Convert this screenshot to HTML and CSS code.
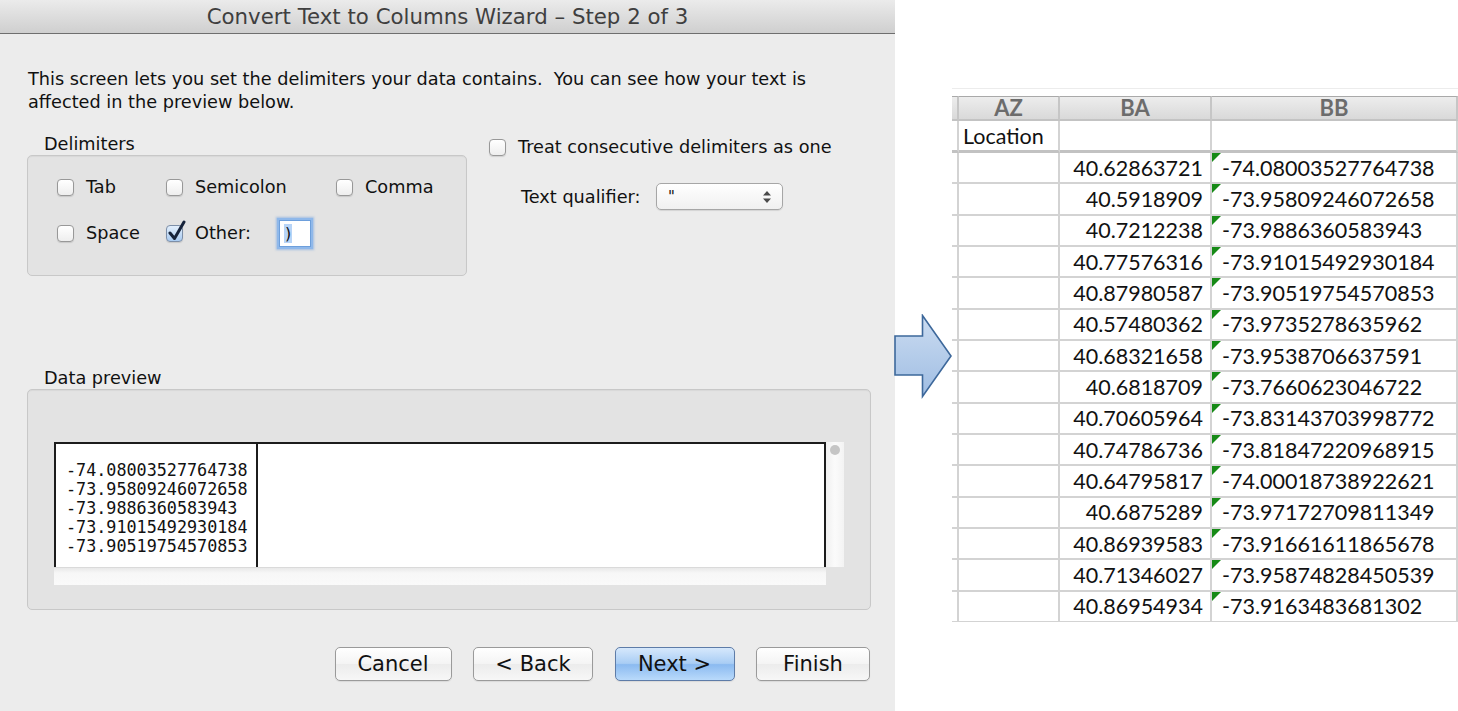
FILE: index.html
```html
<!DOCTYPE html>
<html>
<head>
<meta charset="utf-8">
<title>Convert Text to Columns Wizard</title>
<link rel="stylesheet" href="styles.css">
</head>
<body>
<div class="page">
  <div class="dialog">
    <div class="titlebar">Convert Text to Columns Wizard – Step 2 of 3</div>
    <div class="content">
      <p class="intro">This screen lets you set the delimiters your data contains.&nbsp; You can see how your text is<br>affected in the preview below.</p>
      <div class="options">
        <div class="delims">
          <div class="group-label">Delimiters</div>
          <div class="group-box delim-box">
            <div class="delim-grid">
              <div class="check"><span class="cb"></span><span>Tab</span></div>
              <div class="check"><span class="cb"></span><span>Semicolon</span></div>
              <div class="check"><span class="cb"></span><span>Comma</span></div>
              <div class="check"><span class="cb"></span><span>Space</span></div>
              <div class="check"><span class="cb checked"><svg class="tick" width="20" height="22" viewBox="0 0 20 22"><path d="M3 13 L7.5 18.5 L17 2" fill="none" stroke="#16233a" stroke-width="3" stroke-linejoin="round" stroke-linecap="round"/></svg></span><span class="other-label">Other:</span><span class="field"><span class="sel">)</span></span></div>
            </div>
          </div>
        </div>
        <div class="side">
          <div class="check"><span class="cb"></span><span>Treat consecutive delimiters as one</span></div>
          <div class="qualifier">
            <span class="q-label">Text qualifier:</span>
            <div class="select"><span>"</span><svg class="updown" width="8" height="12" viewBox="0 0 8 12"><path d="M4 0 L8 4.5 L0 4.5 Z M4 12 L8 7.5 L0 7.5 Z" fill="#4a4a4a"/></svg></div>
          </div>
        </div>
      </div>
      <div class="group-label preview-label">Data preview</div>
      <div class="group-box preview-box">
        <div class="preview">
          <div class="preview-table">
            <div class="pcol pcol1">-74.08003527764738<br>-73.95809246072658<br>-73.9886360583943<br>-73.91015492930184<br>-73.90519754570853</div>
            <div class="pcol pcol2"></div>
          </div>
          <div class="vscroll"><span class="knob"></span></div>
          <div class="hscroll"></div>
          <div class="corner"></div>
        </div>
      </div>
      <div class="buttons">
        <div class="btn w117">Cancel</div>
        <div class="btn w120">&lt; Back</div>
        <div class="btn w120 primary">Next &gt;</div>
        <div class="btn w114">Finish</div>
      </div>
    </div>
  </div>
  <div class="sheet-area">
    <svg class="arrow" width="60" height="86" viewBox="0 0 60 86">
      <defs>
        <linearGradient id="ag" x1="0" y1="0" x2="0" y2="1">
          <stop offset="0" stop-color="#cbdcf1"/>
          <stop offset="1" stop-color="#9fbde3"/>
        </linearGradient>
      </defs>
      <path d="M1 22 L28.5 22 L28.5 1.5 L57 42 L28.5 82.5 L28.5 61 L1 61 Z" fill="url(#ag)" stroke="#3d689b" stroke-width="1.6" stroke-linejoin="miter"/>
    </svg>
    <div class="sheet">
      <div class="grid">
        <div class="c h stub"></div><div class="c h">AZ</div><div class="c h">BA</div><div class="c h">BB</div>
        <div class="c loc stub"></div><div class="c loc txt">Location</div><div class="c loc"></div><div class="c loc"></div>
        <div class="c stub"></div><div class="c"></div><div class="c num">40.62863721</div><div class="c str">-74.08003527764738</div>
        <div class="c stub"></div><div class="c"></div><div class="c num">40.5918909</div><div class="c str">-73.95809246072658</div>
        <div class="c stub"></div><div class="c"></div><div class="c num">40.7212238</div><div class="c str">-73.9886360583943</div>
        <div class="c stub"></div><div class="c"></div><div class="c num">40.77576316</div><div class="c str">-73.91015492930184</div>
        <div class="c stub"></div><div class="c"></div><div class="c num">40.87980587</div><div class="c str">-73.90519754570853</div>
        <div class="c stub"></div><div class="c"></div><div class="c num">40.57480362</div><div class="c str">-73.9735278635962</div>
        <div class="c stub"></div><div class="c"></div><div class="c num">40.68321658</div><div class="c str">-73.9538706637591</div>
        <div class="c stub"></div><div class="c"></div><div class="c num">40.6818709</div><div class="c str">-73.7660623046722</div>
        <div class="c stub"></div><div class="c"></div><div class="c num">40.70605964</div><div class="c str">-73.83143703998772</div>
        <div class="c stub"></div><div class="c"></div><div class="c num">40.74786736</div><div class="c str">-73.81847220968915</div>
        <div class="c stub"></div><div class="c"></div><div class="c num">40.64795817</div><div class="c str">-74.00018738922621</div>
        <div class="c stub"></div><div class="c"></div><div class="c num">40.6875289</div><div class="c str">-73.97172709811349</div>
        <div class="c stub"></div><div class="c"></div><div class="c num">40.86939583</div><div class="c str">-73.91661611865678</div>
        <div class="c stub"></div><div class="c"></div><div class="c num">40.71346027</div><div class="c str">-73.95874828450539</div>
        <div class="c stub"></div><div class="c"></div><div class="c num">40.86954934</div><div class="c str">-73.9163483681302</div>
      </div>
    </div>
  </div>
</div>
</body>
</html>
```
FILE: styles.css
```css
* { box-sizing: border-box; margin: 0; padding: 0; }
html, body { width: 1458px; height: 711px; overflow: hidden; background: #ffffff; }
body { font-family: "DejaVu Sans", "Liberation Sans", sans-serif; color: #111; }

.page { display: flex; height: 711px; }

/* dialog */
.dialog { width: 895px; height: 711px; background: #ececec; display: flex; flex-direction: column; flex: none; }
.titlebar {
  height: 34px; border-bottom: 1px solid #6e6e6e;
  background: linear-gradient(#ebebeb, #cfcfcf);
  text-align: center; font-size: 21.3px; line-height: 34px; color: #3f3f3f;
}
.content { padding: 34px 24px 0 27px; }
.intro { font-size: 17.7px; line-height: 23px; padding-left: 1px; color: #111; }

.options { display: flex; margin-top: 20px; }
.delims { width: 440px; flex: none; }
.group-label { font-size: 17.7px; line-height: 20px; padding-left: 17px; }
.group-box {
  background: #e3e3e3; border: 1px solid #c8c8c8; border-radius: 5px;
  box-shadow: inset 0 1px 1px rgba(0,0,0,0.05);
}
.delim-box { height: 121px; margin-top: 1px; padding: 19px 0 0 29px; }
.delim-grid { display: grid; grid-template-columns: 109px 170px auto; row-gap: 22px; }

.check { display: flex; align-items: center; height: 24px; font-size: 17.7px; gap: 12px; white-space: nowrap; }
.cb {
  width: 17px; height: 17px; flex: none; position: relative;
  border: 1px solid #989898; border-radius: 4px;
  background: linear-gradient(#ffffff, #eeeeee);
  box-shadow: 0 1px 1px rgba(0,0,0,0.12);
}
.cb.checked { background: linear-gradient(#e3effc, #a9cbf1); border-color: #7d8fa8; }
.tick { position: absolute; left: 0; top: -6px; }
.other-label { width: 72px; }
.field {
  width: 32px; height: 27px; background: #fff;
  border: 1px solid #6d9fdc; box-shadow: 0 0 0 2px #8fb8ea, 0 0 2px 3px rgba(120,165,225,0.6);
  font-size: 16px; padding: 3px 0 0 4px; line-height: 20px;
}
.sel { background: #b7d4f7; padding: 0 1px; }

.side { margin-left: 22px; padding-top: 1px; }
.qualifier { display: flex; align-items: center; height: 27px; margin-top: 24px; padding-left: 32px; font-size: 17.7px; }
.q-label { width: 135px; flex: none; }
.select {
  width: 127px; height: 27px; position: relative;
  border: 1px solid #a6a6a6; border-radius: 5px;
  background: linear-gradient(#ffffff, #f0f0f0);
  box-shadow: 0 1px 1px rgba(0,0,0,0.1);
  display: flex; align-items: center; padding-left: 11px; font-size: 15px;
}
.updown { position: absolute; right: 11px; top: 7px; }

.preview-label { margin-top: 92px; }
.preview-box { height: 221px; margin-top: 1px; padding: 52px 0 0 26px; }
.preview { display: grid; grid-template-columns: 772px 18px; grid-template-rows: 125px 18px; }
.preview-table { display: flex; background: #fff; border: 2px solid #1c1c1c; border-bottom: none; }
.pcol { font-family: "DejaVu Sans Mono", "Liberation Mono", monospace; font-size: 16.75px; line-height: 19px; color: #111; }
.pcol1 { width: 202px; border-right: 2px solid #1c1c1c; padding: 17px 0 0 10px; }
.pcol2 { flex: 1; }
.vscroll { background: linear-gradient(90deg, #f0f0f0, #fbfbfb 50%, #f3f3f3); position: relative; }
.knob { position: absolute; left: 4px; top: 3px; width: 10px; height: 10px; border-radius: 50%; background: #c5c5c5; }
.hscroll { background: linear-gradient(#e9e9e9, #f7f7f7 30%, #fafafa); border-top: 1px solid #dadada; }
.corner { background: transparent; }

.buttons { display: flex; justify-content: flex-end; gap: 21.5px; margin-top: 37px; padding-right: 1px; }
.btn {
  height: 34px; display: flex; align-items: center; justify-content: center;
  border: 1px solid #9a9a9a; border-radius: 5px;
  background: linear-gradient(#ffffff, #f4f4f4 50%, #ececec 51%, #f7f7f7);
  box-shadow: 0 1px 1px rgba(0,0,0,0.08);
  font-size: 21px; color: #111;
}
.w117 { width: 117px; }
.w120 { width: 120px; }
.w114 { width: 114px; }
.btn.primary {
  border-color: #5e7ca8;
  background: linear-gradient(#d6e8fc, #a9cdf4 48%, #8bbaf0 52%, #b9dafb);
}

/* spreadsheet side */
.sheet-area { flex: 1; position: relative; padding: 88px 0 0 57px; }
.arrow { position: absolute; left: -1px; top: 314px; }
.sheet { width: 506px; height: 534px; overflow: hidden; border-top: 1px solid #ececec; padding-top: 7px; }
.grid {
  display: grid;
  grid-template-columns: 7px 101px 152px 246px;
  grid-template-rows: 25px 32px repeat(15, 31.33px);
}
.c {
  position: relative; display: flex; align-items: center;
  border-right: 2px solid #d3d3d3; border-bottom: 2px solid #d3d3d3;
  font-family: "Lato", "Open Sans", sans-serif; font-size: 21.5px; color: #111;
  white-space: nowrap; overflow: hidden;
}
.h {
  justify-content: center; font-weight: 700; font-size: 22px; line-height: 1; color: #6c6c6c;
  overflow: visible;
  background: linear-gradient(#ededed, #d9d9d9);
  border-top: 1px solid #a9a9a9; border-bottom: 2px solid #c3c3c3; border-right: 2px solid #c6c6c6;
}
.loc { border-bottom: 3px solid #c2c2c2; }
.txt { padding-left: 4px; }
.num { justify-content: flex-end; padding-right: 7px; }
.str { padding-left: 10px; }
.str::before {
  content: ""; position: absolute; left: 0; top: 0;
  border-top: 9px solid #168a16; border-right: 9px solid transparent;
}
```
